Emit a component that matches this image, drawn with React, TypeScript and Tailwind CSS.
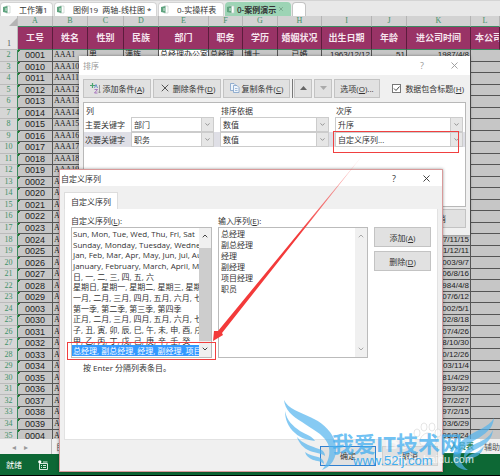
import React from "react";
import { ChevronDown, ChevronUp, X } from "lucide-react";

const columns = [
  { letter: "A", title: "工号", width: "w-[35px]" },
  { letter: "B", title: "姓名", width: "w-[35px]" },
  { letter: "C", title: "性别", width: "w-[36px]" },
  { letter: "D", title: "民族", width: "w-[35px]" },
  { letter: "E", title: "部门", width: "w-[50px]" },
  { letter: "F", title: "职务", width: "w-[34px]" },
  { letter: "G", title: "学历", width: "w-[35px]" },
  { letter: "H", title: "婚姻状况", width: "w-[44px]" },
  { letter: "I", title: "出生日期", width: "w-[50px]" },
  { letter: "J", title: "年龄", width: "w-[35px]" },
  { letter: "K", title: "进公司时间", width: "w-[64px]" },
  { letter: "L", title: "本公司工龄", width: "" },
];

// ids are sorted as text: 1, 10..19, 2, 20..29, 3, 30..39, 4
const ids = [
  1, 10, 11, 12, 13, 14, 15, 16, 17, 18, 19, 2, 20, 21, 22, 23, 24, 25, 26, 27, 28, 29, 3, 30, 31,
  32, 33, 34, 35, 36, 37, 38, 39, 4,
];

const firstRow = ["男", "满族", "总经理办公室", "总经理", "博士", "已婚", "1963/12/12", "51"];

const entryDates: Record<number, string> = {
  2: "1987/4/8",
  18: "1997/11/15",
  19: "2001/12/11",
  20: "2003/9/7",
  21: "2006/8/16",
  22: "1984/4/8",
  23: "2007/6/12",
  24: "2002/5/1",
  25: "2002/8/18",
  26: "2007/4/26",
  27: "1998/10/30",
  28: "2000/12/26",
  29: "2003/11/4",
  30: "1981/4/29",
  31: "1993/3/2",
  32: "1997/2/27",
  33: "1997/2/15",
  34: "2003/6/29",
  35: "1996/3/24",
};

const lists = [
  "Sun, Mon, Tue, Wed, Thu, Fri, Sat",
  "Sunday, Monday, Tuesday, Wednesday, Thursday",
  "Jan, Feb, Mar, Apr, May, Jun, Jul, Aug, Sep",
  "January, February, March, April, May, June",
  "日, 一, 二, 三, 四, 五, 六",
  "星期日, 星期一, 星期二, 星期三, 星期四",
  "一月, 二月, 三月, 四月, 五月, 六月, 七月",
  "第一季, 第二季, 第三季, 第四季",
  "正月, 二月, 三月, 四月, 五月, 六月, 七月",
  "子, 丑, 寅, 卯, 辰, 巳, 午, 未, 申, 酉, 戌, 亥",
  "甲, 乙, 丙, 丁, 戊, 己, 庚, 辛, 壬, 癸",
  "总经理, 副总经理, 经理, 副经理, 项目经理",
];

function FileIcon() {
  return (
    <svg className="shrink-0" width="8" height="9" viewBox="0 0 8 9">
      <path d="M3 1h4v7H3z" fill="#fff" stroke="#c3cec8" strokeWidth=".7" />
      <path d="M0 2 4.500 1v7L0 7z" fill="#5fa37f" />
      <path d="M3 3v3" stroke="#fff" strokeWidth=".8" />
    </svg>
  );
}

function FileTab({ text, className }: { text: string; className: string }) {
  return (
    <button
      className={`flex h-[14px] items-center gap-2 overflow-hidden rounded-t border border-b-0 border-[#d4d4d4] pl-0.5 whitespace-pre ${className}`}
    >
      <FileIcon />
      {text}
    </button>
  );
}

function FileTabs() {
  return (
    <div className="flex h-4 shrink-0 items-end gap-px border-t border-[#d4d4d4] bg-[#e8e8e8]">
      <FileTab text="工作簿1" className="w-[53px] bg-white" />
      <FileTab text="图例19  两轴-线柱图 *" className="w-[103px] bg-white" />
      <FileTab text="0-实操样表" className="w-[66px] bg-white" />
      <button className="flex h-[14px] w-[66px] items-center gap-0.5 rounded-t bg-[#9dd4b5] pl-0.5 font-semibold whitespace-nowrap">
        <FileIcon />
        0-案例演示
        <X size={6} strokeWidth={3} color="#6d9a80" />
      </button>
      <button aria-label="新建" className="h-[14px] w-[14px] rounded-t border border-b-0 border-[#c4c4c4] bg-white" />
    </div>
  );
}

function Sheet() {
  return (
    <div className="min-h-0 flex-1 overflow-hidden bg-[#c6c6c6]">
      <table className="h-[426px] w-full table-fixed border-separate border-spacing-0 whitespace-nowrap">
        <colgroup>
          <col className="w-[18px]" />
          {columns.map((c) => (
            <col key={c.letter} className={c.width} />
          ))}
        </colgroup>
        <thead>
          <tr className="h-[11px] bg-[#d2d2d2] font-['Liberation_Serif',serif] leading-[10px] text-[#3f9168]">
            <th className="border-r border-[#bbb] bg-[#e6e6e6] p-0">
              <svg className="ml-auto" width="8" height="8" viewBox="0 0 8 8">
                <path d="M8 0v8H0z" fill="#b4b4b4" />
              </svg>
            </th>
            {columns.map((c) => (
              <th key={c.letter} className="overflow-hidden border-r border-b border-r-[#b4b4b4] border-b-[#3c8a60] p-0 font-normal">
                {c.letter}
              </th>
            ))}
          </tr>
          <tr className="h-[23px] bg-[#993366] text-[9px] text-white">
            <th className="border-r border-b border-[#bbb] bg-[#e6e6e6] p-0 pr-1.5 text-right align-bottom font-['Liberation_Serif',serif] text-[8px] leading-[10px] font-normal text-[#555]">
              1
            </th>
            {columns.map((c) => (
              <th
                key={c.letter}
                className="overflow-hidden border-r border-b border-r-[#5c1c3c] border-b-[#3c8a60] p-0 leading-[10px] font-bold text-[#f6e6ee] last:pl-1 last:text-left"
              >
                {c.title}
              </th>
            ))}
          </tr>
        </thead>
        <tbody className="font-['Liberation_Sans','Noto_Sans_CJK_SC',sans-serif] leading-[10px] text-[#222]">
          {ids.map((id, i) => (
            <tr key={id}>
              <th className="border-r border-b border-r-[#3c8a60] border-b-[#bbb] bg-[#d6d6d6] p-0 text-center font-['Liberation_Serif',serif] font-normal text-[#3f9168]">
                {i + 2}
              </th>
              <td className="border-r border-b border-[#555] bg-[linear-gradient(135deg,#1d7a2d_2px,transparent_2px)] p-0 text-center text-[9px]">
                {String(id).padStart(4, "0")}
              </td>
              <td className="overflow-hidden border-r border-b border-[#555] p-0 pl-px font-['Liberation_Serif',serif]">
                AAA{id}
              </td>
              {firstRow.map((value, j) => (
                <td
                  key={value}
                  className={`overflow-hidden border-r border-b border-[#555] p-0 px-px ${i === 0 && j === 2 ? "bg-white" : ""} ${j > 5 ? "text-right" : j === 5 ? "text-center" : ""}`}
                >
                  {i === 0 ? value : ""}
                </td>
              ))}
              <td className="border-r border-b border-[#555] p-0 pr-px text-right">{entryDates[i + 2]}</td>
              <td className="border-b border-[#555] p-0" />
            </tr>
          ))}
        </tbody>
      </table>
    </div>
  );
}

function SheetBar() {
  return (
    <div className="flex h-[15px] shrink-0 items-stretch overflow-hidden bg-[#f0f0f0] leading-[14px]">
      <div className="flex w-[52px] items-center gap-2 border-r border-[#bbb] pl-3 text-[#999]">
        <span>◂</span>
        <span>▸</span>
      </div>
      <button className="px-1 text-[#555]">目录</button>
      <div className="flex-1" />
      <button className="w-16 border-b border-[#217346] bg-white pr-1.5 text-right font-semibold text-[#2b8353]">人员表</button>
      <button className="w-5 overflow-hidden pl-1 text-left whitespace-nowrap text-[#555]">辅助表</button>
    </div>
  );
}

function StatusBar() {
  return (
    <div className="flex h-[22px] shrink-0 items-center gap-4 border-b border-black bg-[#0d6835] pl-1.5 text-white">
      <span>就绪</span>
      <svg width="10" height="10" viewBox="0 0 10 10">
        <path d="M1.5 3.5h8v6h-8z" fill="none" stroke="#d8eadf" />
        <path d="M3 5.5h1M5 5.5h3M3 7.5h1M5 7.5h3M5 2h4.5" stroke="#d8eadf" />
        <circle cx="1.8" cy="1.8" r="1.6" fill="#fff" />
      </svg>
    </div>
  );
}

function TitleBar({ text, className }: { text: string; className: string }) {
  return (
    <div className={`flex shrink-0 items-center bg-white ${className}`}>
      <span className="flex-1">{text}</span>
      <button aria-label="帮助" className="w-8 text-[9px]">
        ?
      </button>
      <button aria-label="关闭" className="flex w-8 justify-center">
        <X size={11} strokeWidth={2} />
      </button>
    </div>
  );
}

function DialogButton({ className = "", children }: { className?: string; children: React.ReactNode }) {
  return (
    <button
      className={`flex items-center justify-center gap-0.5 border bg-[#e1e1e1] whitespace-nowrap ${className}`}
    >
      {children}
    </button>
  );
}

function Dropdown({ label, value, className }: { label: string; value: string; className: string }) {
  return (
    <div className={`relative h-[15px] border border-[#ccc] bg-white ${className}`}>
      <select aria-label={label} className="block h-full w-full appearance-none bg-transparent pl-0.5 leading-[12px]">
        <option>{value}</option>
      </select>
      <span className="pointer-events-none absolute inset-y-0 right-0 flex w-3 items-center justify-center border-l border-[#ccc] bg-[#e6e6e6]">
        <ChevronDown size={7} strokeWidth={3} color="#888" />
      </span>
    </div>
  );
}

function SortRow({ label, column, order, className = "" }: { label: string; column: string; order: string; className?: string }) {
  return (
    <div className={`flex h-[15px] items-center pr-0.5 ${className}`}>
      <span className="w-[47px] pl-px">{label}</span>
      <Dropdown label={label} value={column} className="mr-1.5 w-[83px]" />
      <Dropdown label="排序依据" value="数值" className="mr-1.5 w-[109px]" />
      <Dropdown label="次序" value={order} className="flex-1" />
    </div>
  );
}

function SortDialog() {
  return (
    <div role="dialog" aria-label="排序" className="absolute top-[56px] left-[79px] flex h-[179px] w-[391px] flex-col bg-[#f0f0f0] shadow-[0_0_3px_rgba(0,0,0,0.4)]">
      <TitleBar text="排序" className="h-[19px] pl-1 text-[#999]" />
      <div className="flex h-[27px] items-center gap-0.5 px-1 pb-px">
        <DialogButton className="h-[19px] w-[68px] border-[#c3c3c3]">
          <svg width="11" height="11" viewBox="0 0 11 11">
            <path d="M2.5 0v5M0 2.5h5" stroke="#4ba36f" strokeWidth="1.2" />
            <path d="m4.500 5 1.500-3.500L7.500 5" fill="none" stroke="#4a7fc1" strokeWidth=".8" />
            <path d="M4.500 6.500h3l-3 3.500h3" fill="none" stroke="#9b59b6" strokeWidth=".8" />
            <path d="M9.500 2v8M8 8.500 9.500 10 11 8.500" fill="none" stroke="#888" strokeWidth=".8" />
          </svg>
          <span>
            添加条件(<u>A</u>)
          </span>
        </DialogButton>
        <DialogButton className="h-[19px] w-[68px] border-[#c3c3c3]">
          <X size={12} color="#555" />
          <span>
            删除条件(<u>D</u>)
          </span>
        </DialogButton>
        <DialogButton className="h-[19px] w-[67px] border-[#c3c3c3]">
          <svg width="10" height="10" viewBox="0 0 10 10">
            <path d="M.5.500h3.500L6 2.500v5H.5z" fill="#eef4fb" stroke="#7da0c8" strokeWidth=".8" />
            <path d="M3.500 2.500H7l2 2v5H3.500z" fill="#eef4fb" stroke="#7da0c8" strokeWidth=".8" />
            <path d="M5 5.500h2.500M5 7.500h2.500" stroke="#7da0c8" strokeWidth=".7" />
          </svg>
          <span>
            复制条件(<u>C</u>)
          </span>
        </DialogButton>
        <div className="flex gap-0.5 border-l border-[#777] pl-px">
          <DialogButton className="h-[19px] w-[18px] border-[#c3c3c3]">
            <svg width="7" height="4" viewBox="0 0 7 4" role="img" aria-label="上移">
              <path d="M0 4 3.500 0 7 4z" fill="#666" />
            </svg>
          </DialogButton>
          <DialogButton className="h-[19px] w-[18px] border-[#c3c3c3] bg-[#cbcbcb]">
            <svg width="7" height="4" viewBox="0 0 7 4" role="img" aria-label="下移">
              <path d="M0 0h7L3.500 4z" fill="#aaa" />
            </svg>
          </DialogButton>
        </div>
        <DialogButton className="h-[19px] w-[46px] border-[#c3c3c3]">
          <span>
            选项(<u>O</u>)...
          </span>
        </DialogButton>
        <label className="ml-auto flex items-center gap-1 pr-0.5 whitespace-nowrap">
          <span className="relative flex">
            <input type="checkbox" defaultChecked className="size-[9px] appearance-none border border-[#777] bg-white" />
            <svg className="pointer-events-none absolute inset-0" width="9" height="9" viewBox="0 0 9 9">
              <path d="m2 4.500 2 2 3.500-4" fill="none" stroke="#444" />
            </svg>
          </span>
          <span>
            数据包含标题(<u>H</u>)
          </span>
        </label>
      </div>
      <div className="mx-1 flex-1 border border-[#b8b8b8] bg-white">
        <div className="flex h-[14px] items-center">
          <span className="w-[137px] pl-0.5">列</span>
          <span className="w-[115px]">排序依据</span>
          <span>次序</span>
        </div>
        <SortRow label="主要关键字" column="部门" order="升序" />
        <SortRow label="次要关键字" column="职务" order="自定义序列..." className="bg-[#dfdfe6]" />
      </div>
      <div className="flex h-[28px] items-start justify-end px-1 pt-0.5">
        <DialogButton className="h-[19px] w-14 border-[#c3c3c3]">取消</DialogButton>
      </div>
    </div>
  );
}

function Scrollbar({ thumb = false }: { thumb?: boolean }) {
  return (
    <div className={`flex w-3 shrink-0 flex-col items-center bg-[#f0f0f0] ${thumb ? "text-[#444]" : "text-[#aaa]"}`}>
      <ChevronUp size={8} strokeWidth={3} className="my-1 shrink-0" />
      <div className={`w-full flex-1 ${thumb ? "mt-1 bg-[#cdcdcd]" : ""}`} />
      <ChevronDown size={8} strokeWidth={3} className="my-1 shrink-0" />
    </div>
  );
}

function ListDialog() {
  return (
    <div role="dialog" aria-label="自定义序列" className="absolute top-[169px] left-[59px] flex h-[303px] w-[384px] flex-col border border-[#d99a9a] bg-[#f0f0f0] shadow-[0_0_3px_rgba(0,0,0,0.4)]">
      <TitleBar text="自定义序列" className="h-[16px] pl-px" />
      <div className="flex px-1 pt-1.5">
        <button role="tab" aria-selected="true" className="h-[17px] w-[54px] border border-b-0 border-[#ddd] bg-white">
          自定义序列
        </button>
      </div>
      <div className="mx-1 flex flex-1 flex-col border border-t-0 border-[#e2e2e2] bg-white px-1.5 pt-1.5">
        <div className="flex">
          <div className="w-[141px]">
            <p id="lists-label" className="pb-px leading-[11px]">
              自定义序列(<u>L</u>):
            </p>
            <div className="flex h-[131px] border border-[#bbb]">
              <ul role="listbox" aria-labelledby="lists-label" className="flex min-w-0 flex-1 flex-col overflow-hidden pb-px whitespace-nowrap">
                {lists.map((item, i) => (
                  <li
                    key={item}
                    role="option"
                    aria-selected={i === lists.length - 1}
                    className="flex min-h-0 flex-1 items-center pl-px aria-selected:bg-[#3399ff] aria-selected:text-white"
                  >
                    {item}
                  </li>
                ))}
              </ul>
              <Scrollbar thumb />
            </div>
          </div>
          <div className="ml-1.5 w-[150px]">
            <label htmlFor="entries" className="block pb-px leading-[11px]">
              输入序列(<u>E</u>):
            </label>
            <div className="flex h-[131px] border border-[#bbb]">
              <textarea
                id="entries"
                className="min-w-0 flex-1 resize-none overflow-hidden pl-0.5 leading-[11px]"
                defaultValue={"总经理\n副总经理\n经理\n副经理\n项目经理\n职员"}
              />
              <Scrollbar />
            </div>
          </div>
          <div className="ml-1.5 flex flex-1 flex-col gap-1 pt-3">
            <DialogButton className="h-5 border-[#c3c3c3]">
              <span>
                添加(<u>A</u>)
              </span>
            </DialogButton>
            <DialogButton className="h-5 border-[#c3c3c3]">
              <span>
                删除(<u>D</u>)
              </span>
            </DialogButton>
          </div>
        </div>
        <p className="pt-1 pl-3">按 Enter 分隔列表条目。</p>
      </div>
      <div className="flex h-[31px] items-center justify-end gap-1.5 px-1">
        <DialogButton className="h-5 w-14 border-[#2f7fd0]">确定</DialogButton>
        <DialogButton className="h-5 w-14 border-[#d0d0d0]">取消</DialogButton>
      </div>
    </div>
  );
}

function Annotations() {
  return (
    <div className="pointer-events-none absolute inset-0">
      <div className="absolute top-[131px] left-[333px] h-[22px] w-[126px] border border-[#f04040]" />
      <div className="absolute top-[342px] left-[67px] h-[18px] w-[149px] border border-[#f04040]" />
      <svg className="absolute top-0 left-0" width="500" height="476" viewBox="0 0 500 476">
        <defs>
          <linearGradient id="fade" x1="362" y1="156" x2="300" y2="235" gradientUnits="userSpaceOnUse">
            <stop offset="0" stopColor="#f33a3a" stopOpacity=".2" />
            <stop offset="1" stopColor="#f33a3a" />
          </linearGradient>
        </defs>
        <path d="M362 156 222 333l1 2-10 6 1-10 4 0z" fill="url(#fade)" />
      </svg>
    </div>
  );
}

function Watermark() {
  return (
    <div className="pointer-events-none absolute inset-0 whitespace-nowrap">
      <svg className="absolute top-0 left-0" width="500" height="476" viewBox="0 0 500 476">
        <g fill="#fff" fillOpacity=".6" stroke="#ccc" strokeOpacity=".5">
          <ellipse cx="417" cy="433" rx="3" ry="4" />
          <ellipse cx="424" cy="427" rx="3" ry="4" />
          <ellipse cx="432" cy="427" rx="3" ry="4" />
          <ellipse cx="438" cy="433" rx="3" ry="4" />
          <path d="M428 433c5 0 9 7 8 10-2 4-5 2-8 2s-7 2-8-2 3-10 8-10z" />
        </g>
        <g fill="#53b3ee" fillOpacity=".7">
          <path d="M284 400C288 409 300 412 310 417C324 423 335 434 336 447C337 458 331 467 322 470C329 461 331 453 328 444C323 433 311 429 302 422C292 416 285 410 284 400z" />
          <path d="M285 411C287 421 293 426 300 431C307 435 312 436 315 441C307 440 300 438 295 433C288 427 285 419 285 411z" />
          <path d="M297 437C303 444 311 446 319 449C323 450 325 453 325 456C321 453 316 453 310 451C303 448 299 443 297 437z" />
          <path d="M305 452C309 455 314 456 318 457C322 458 324 461 324 464C321 461 317 461 313 460C309 458 306 456 305 452z" />
          <path d="M494 418C488 428 476 430 467 437C455 445 450 455 455 464C458 468 463 470 468 470C462 466 459 460 461 454C464 444 475 441 483 435C490 430 493 426 494 418z" />
          <path d="M493 430C489 438 482 441 475 444C467 448 463 452 464 460C467 453 473 451 480 447C488 443 492 438 493 430z" />
          <path d="M484 446C480 451 476 453 472 454C467 456 465 459 466 465C468 460 471 459 475 457C480 455 483 451 484 446z" />
        </g>
      </svg>
      <div className="absolute top-[432px] left-[385px] font-['Liberation_Sans',sans-serif] text-[20px] leading-5 font-bold text-white/60">Bai</div>
      <div className="absolute top-[453px] left-[385px] w-[89px] text-right font-['Liberation_Sans',sans-serif] text-[11px] leading-3 text-white/80">
        jingyan.baidu.com
      </div>
      <div className="absolute top-[432px] left-[332px] text-[22px] leading-[22px] font-bold text-[#42aef0]/75">我爱IT技术网</div>
      <div className="absolute top-[454px] left-[353px] font-['Liberation_Sans',sans-serif] text-[13px] leading-[14px] text-[#42aef0]">
        www.52ij.com
      </div>
    </div>
  );
}

function App() {
  return (
    <div className="relative flex h-screen flex-col overflow-hidden font-['Open_Sans','Noto_Sans_CJK_SC',sans-serif] text-[8px] leading-[11px] text-[#333]">
      <FileTabs />
      <Sheet />
      <SheetBar />
      <StatusBar />
      <SortDialog />
      <ListDialog />
      <Annotations />
      <Watermark />
    </div>
  );
}

export default App;
